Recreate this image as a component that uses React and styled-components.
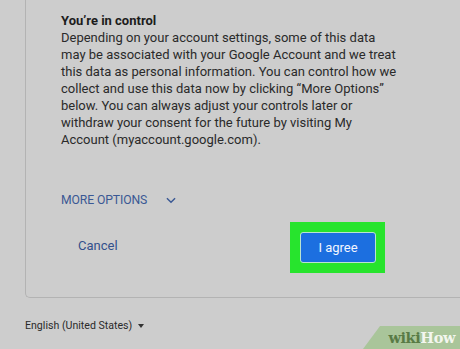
import * as React from 'react';
import styled, { createGlobalStyle } from 'styled-components';

const GlobalStyle = createGlobalStyle`
  html, body {
    margin: 0;
    padding: 0;
    background: #cdcdcd;
    overflow: hidden;
  }
  body {
    font-family: Roboto, "Liberation Sans", Arial, sans-serif;
  }
`;

const Page = styled.div`
  position: relative;
  width: 460px;
  height: 349px;
  padding-left: 25px;
  box-sizing: border-box;
`;

const Card = styled.div`
  height: 298px;
  box-sizing: border-box;
  margin-right: -20px;
  border-left: 1px solid #b3b3b3;
  border-bottom: 1px solid #b3b3b3;
  border-bottom-left-radius: 5px;
  padding: 12px 0 0 35px;
  display: flex;
  flex-direction: column;
`;

const Title = styled.div`
  font-size: 13px;
  font-weight: 700;
  line-height: 17px;
  color: #1c1c1c;
`;

const Body = styled.div`
  font-size: 13px;
  line-height: 17px;
  color: #2a2a2a;
`;

const Line = styled.div`
  white-space: nowrap;
`;

const MoreRow = styled.div`
  display: flex;
  align-items: center;
  gap: 17px;
  margin-top: 44px;
  height: 16px;
  color: #3a5894;
  font-size: 12.2px;
  letter-spacing: -0.1px;
`;

const Actions = styled.div`
  display: flex;
  align-items: flex-start;
  margin-top: 14px;
`;

const TextButton = styled.div`
  margin-left: 17px;
  margin-top: 15px;
  width: 212px;
  font-size: 13px;
  line-height: 17px;
  color: #33508c;
`;

const Highlight = styled.div`
  width: 95px;
  height: 51px;
  background: #27e42d;
  display: flex;
  align-items: center;
  justify-content: center;
  padding-left: 1px;
  box-sizing: border-box;
`;

const Primary = styled.div`
  width: 76px;
  height: 31px;
  box-sizing: border-box;
  border-radius: 3px;
  border: 1px solid #b9e3d0;
  background: #1c6fe0;
  color: #f2f6ff;
  font-size: 13px;
  display: flex;
  align-items: center;
  justify-content: center;
`;

const Footer = styled.div`
  display: flex;
  align-items: center;
  gap: 6px;
  margin-top: 21px;
  font-size: 10.6px;
  color: #2a2a2a;
`;

const Caret = styled.span`
  width: 0;
  height: 0;
  border-left: 3.5px solid transparent;
  border-right: 3.5px solid transparent;
  border-top: 4px solid #333;
`;

const Watermark = styled.div`
  position: absolute;
  right: 0;
  bottom: 0;
  width: 97px;
  height: 23px;
  background: #a9c59a;
  clip-path: polygon(17px 0, 100% 0, 100% 100%, 0 100%);
  display: flex;
  align-items: center;
  justify-content: flex-end;
  padding-right: 5px;
  box-sizing: border-box;
  font-family: "DejaVu Serif", "Liberation Serif", serif;
  font-weight: 700;
  font-size: 14.5px;
  letter-spacing: -0.4px;
`;

const Wiki = styled.span`
  color: #587a45;
`;

const How = styled.span`
  color: #f3f6ef;
`;

const lines = [
  'Depending on your account settings, some of this data',
  'may be associated with your Google Account and we treat',
  'this data as personal information. You can control how we',
  'collect and use this data now by clicking \u201cMore Options\u201d',
  'below. You can always adjust your controls later or',
  'withdraw your consent for the future by visiting My',
  'Account (myaccount.google.com).',
];

export default function App() {
  return (
    <Page>
      <GlobalStyle />
      <Card>
        <Title>You’re in control</Title>
        <Body>
          {lines.map((l) => (
            <Line key={l}>{l}</Line>
          ))}
        </Body>
        <MoreRow>
          <span>MORE OPTIONS</span>
          <svg width="14" height="14" viewBox="0 0 24 24" fill="none">
            <path d="M5 9l7 7 7-7" stroke="#3a5894" strokeWidth="2.4" />
          </svg>
        </MoreRow>
        <Actions>
          <TextButton>Cancel</TextButton>
          <Highlight>
            <Primary>I agree</Primary>
          </Highlight>
        </Actions>
      </Card>
      <Footer>
        <span>English (United States)</span>
        <Caret />
      </Footer>
      <Watermark>
        <Wiki>wiki</Wiki>
        <How>How</How>
      </Watermark>
    </Page>
  );
}
